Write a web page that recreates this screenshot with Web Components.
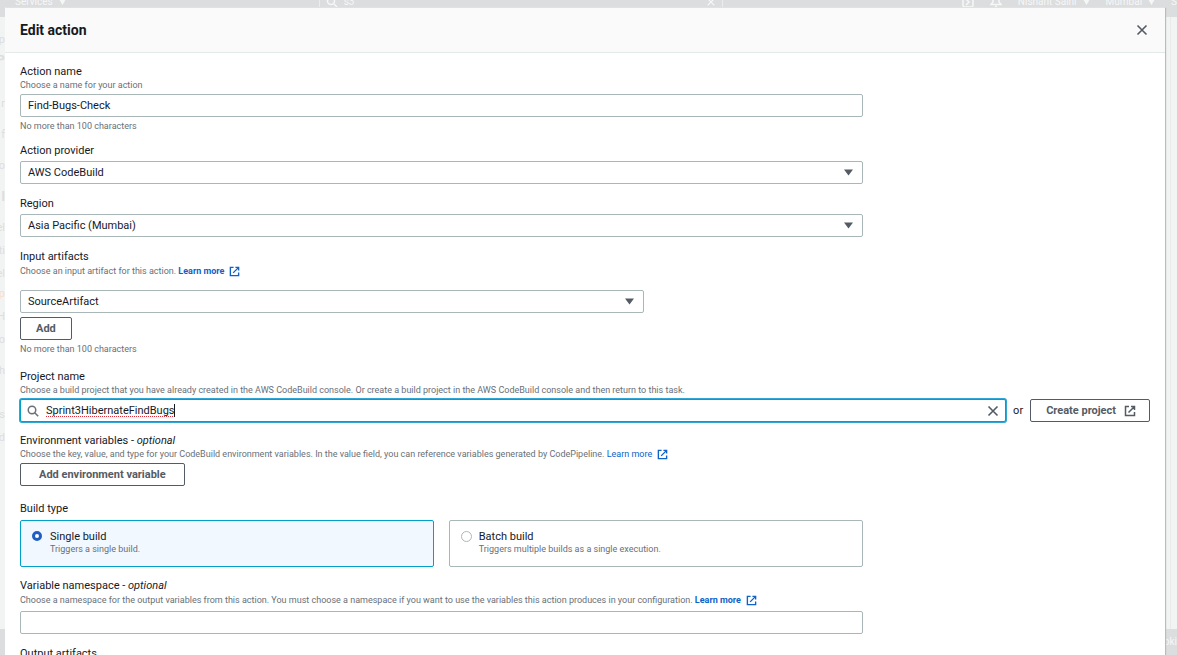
<!DOCTYPE html>
<html lang="en">
<head>
<meta charset="utf-8">
<title>Edit action</title>
<style>
html, body { height: 100%; margin: 0; overflow: hidden; }
body {
  font-family: Roboto, "Noto Sans", sans-serif;
  font-size: 11px; line-height: 14px; color: #16191f; background: #f2f3f3;
}
</style>
</head>
<body>
<console-page>
  <console-nav slot="nav"></console-nav>
  <console-sidebar slot="side"></console-sidebar>
  <edit-modal heading="Edit action">
    <text-field label="Action name" hint="Choose a name for your action" note="No more than 100 characters" value="Find-Bugs-Check"></text-field>
    <select-field label="Action provider" value="AWS CodeBuild"></select-field>
    <select-field label="Region" value="Asia Pacific (Mumbai)"></select-field>
    <select-field nested label="Input artifacts" hint="Choose an input artifact for this action." note="No more than 100 characters" value="SourceArtifact" action="Add"><ext-link slot="link" strong>Learn more</ext-link></select-field>
    <search-field label="Project name" hint="Choose a build project that you have already created in the AWS CodeBuild console. Or create a build project in the AWS CodeBuild console and then return to this task." value="Sprint3HibernateFindBugs"><aws-button icon>Create project</aws-button></search-field>
    <button-field label="Environment variables" optional hint="Choose the key, value, and type for your CodeBuild environment variables. In the value field, you can reference variables generated by CodePipeline."><ext-link slot="link">Learn more</ext-link><aws-button wide>Add environment variable</aws-button></button-field>
    <build-tiles label="Build type"></build-tiles>
    <text-field label="Variable namespace" optional tall hint="Choose a namespace for the output variables from this action. You must choose a namespace if you want to use the variables this action produces in your configuration." value=""><ext-link slot="link" strong>Learn more</ext-link></text-field>
    <text-field label="Output artifacts" value=""></text-field>
  </edit-modal>
</console-page>

<script>
const EXT = `<svg viewBox="0 0 12 12" width="12" height="12" fill="none" stroke="currentColor" stroke-width="1.5" aria-hidden="true"><path d="M5 1.500H1.500v9h9V7M7 1.500h3.500V5M10.500 1.500 4.500 7.500"/></svg>`;
const CROSS = `<svg viewBox="0 0 12 12" width="12" height="12" fill="none" stroke="#545b64" stroke-width="1.600" aria-hidden="true"><path d="M1.500 1.500l9 9M10.500 1.500l-9 9"/></svg>`;
const ARROW = `<svg class="arrow" viewBox="0 0 9 7" width="9" height="7" aria-hidden="true"><path d="M0 .5h9L4.500 6.500z" fill="#545b64"/></svg>`;

const FIELD = `
:host { display: block; --width: calc(75% - 5px); padding-top: 1px; margin-bottom: 12px; }
:host([note]) { margin-bottom: 11px; }
* { box-sizing: border-box; }
label, .label { display: block; line-height: 14px; }
.hint { margin-top: 1px; font-size: 9px; line-height: 11px; color: #687078; white-space: nowrap; }
:host([nested]) .hint { margin-top: 0; line-height: 14px; }
:host([nested]) .control { margin-top: 12px; }
:host([tall]) .hint { margin-top: 0; line-height: 14px; }
:host([tall]) .control { margin-top: 4px; }
.control { margin-top: 3px; width: var(--width); }
.note { margin-top: 4px; font-size: 9px; line-height: 11px; color: #687078; }
input[type=text], input[type=search], select {
  display: block; width: 100%; height: 23px; margin: 0; padding: 0 7px;
  font: inherit; color: inherit; background: #fff;
  border: 1px solid #aab7b8; border-radius: 2px; appearance: none; outline: none;
}
`;

class Base extends HTMLElement {
  connectedCallback() {
    if (this.shadowRoot) return;
    this.attachShadow({ mode: 'open' }).innerHTML = `<style>${this.css()}</style>${this.html()}`;
  }
  a(name) { return this.getAttribute(name) || ''; }
  css() { return FIELD; }
  head(tag = 'label for="c"') {
    const close = tag.split(' ')[0];
    const opt = this.hasAttribute('optional') ? ' - <i>optional</i>' : '';
    const hint = this.a('hint') ? `<div class="hint">${this.a('hint')} <slot name="link"></slot></div>` : '';
    return `<${tag}>${this.a('label')}${opt}</${close}>${hint}`;
  }
  note() { return this.a('note') ? `<div class="note">${this.a('note')}</div>` : ''; }
}

customElements.define('ext-link', class extends Base {
  css() { return `
    :host { font-size: 9px; }
    a { color: #0f62c8; text-decoration: none; }
    :host([strong]) a { font-weight: 700; }
    svg { margin: -2px 0 -2px 5px; vertical-align: middle; width: 11px; height: 11px; }`; }
  html() { return `<a href="#"><slot></slot>${EXT}</a>`; }
});

customElements.define('aws-button', class extends Base {
  css() { return `
    :host { display: inline-block; vertical-align: top; }
    button { display: flex; align-items: center; gap: 8px; height: 23px; box-sizing: border-box; margin: 0; padding: 0 15px;
      font: inherit; font-weight: 700; color: #545b64; background: #fff; white-space: nowrap;
      border: 1px solid #545b64; border-radius: 2px; }
    :host([icon]) button { padding: 0 13px 0 15px; }
    :host([wide]) button { padding: 0 18px; }`; }
  html() { return `<button type="button"><slot></slot>${this.hasAttribute('icon') ? EXT : ''}</button>`; }
});

customElements.define('text-field', class extends Base {
  html() { return `${this.head()}<div class="control"><input id="c" type="text" value="${this.a('value')}"></div>${this.note()}`; }
});

customElements.define('select-field', class extends Base {
  css() { return FIELD + `
    :host([nested]) { margin-bottom: 14px; }
    :host([nested]) .control { width: calc((75% - 5px) * 3 / 4 - 8px); }
    .box { display: grid; align-items: center; }
    .box > * { grid-area: 1 / 1; }
    .arrow { justify-self: end; margin-right: 10px; pointer-events: none; }
    aws-button { margin-top: 4px; }`; }
  html() {
    const add = this.a('action') ? `<aws-button>${this.a('action')}</aws-button>` : '';
    return `${this.head()}<div class="control box"><select id="c"><option>${this.a('value')}</option></select>${ARROW}</div>${add}${this.note()}`;
  }
});

customElements.define('search-field', class extends Base {
  css() { return FIELD + `
    :host { margin-bottom: 11px; }
    .row { display: flex; align-items: center; gap: 7px; margin-top: 3px; }
    .box { flex: 1; display: grid; align-items: center; }
    .box > * { grid-area: 1 / 1; }
    input[type=search] { padding: 0 30px 0 25px; border-color: #00a1c9; box-shadow: 0 0 0 1px #2ea6d6; caret-color: transparent;
      text-decoration-line: underline; text-decoration-style: dotted; text-decoration-color: #e0303a;
      text-decoration-thickness: 1px; text-underline-offset: 2px; text-decoration-skip-ink: none; }
    input::-webkit-search-cancel-button { display: none; }
    .glass { margin-left: 7px; pointer-events: none; }
    .caret { width: 1px; height: 13px; margin-left: 154px; background: #16191f; pointer-events: none; }
    .clear { justify-self: end; display: flex; margin-right: 7px; padding: 0; border: 0; background: none; }`; }
  html() { return `${this.head()}<div class="row"><div class="box"><input id="c" type="search" spellcheck="true" value="${this.a('value')}">
    <svg class="glass" viewBox="0 0 12 12" width="12" height="12" fill="none" stroke="#687078" stroke-width="1.500" aria-hidden="true"><circle cx="5" cy="5" r="3.750"/><path d="M7.700 7.700l3.500 3.500"/></svg>
    <span class="caret"></span><button class="clear" type="button" aria-label="Clear">${CROSS}</button></div><span>or</span><slot></slot></div>`; }
});

customElements.define('button-field', class extends Base {
  css() { return FIELD + `:host { margin-bottom: 15px; }`; }
  html() { return `${this.head('div class="label"')}<div class="control"><slot></slot></div>`; }
});

customElements.define('build-tiles', class extends Base {
  css() { return FIELD + `
    :host { margin-bottom: 11px; }
    fieldset { margin: 0; padding: 0; border: 0; min-width: 0; }
    legend { padding: 0; line-height: 14px; }
    .tiles { display: grid; grid-template-columns: 1fr 1fr; gap: 15px; margin-top: 4px; width: var(--width); }
    .tile { display: grid; grid-template-columns: 11px 1fr; column-gap: 7px; align-content: start; min-height: 47px;
      padding: 9px 11px 8px; border: 1px solid #aab7b8; border-radius: 2px; }
    .tile:has(:checked) { background: #f1f8ff; border-color: #00a1c9; }
    input { appearance: none; align-self: center; width: 11px; height: 11px; margin: 0 0 2px; border: 1px solid #aab7b8; border-radius: 50%; background: #fff; }
    input:checked { width: 10px; height: 10px; border: 3px solid #1f5fc4; }
    .hint { grid-column: 2; margin-top: 0; }`; }
  html() {
    const tile = (name, text, on) => `<label class="tile"><input type="radio" name="build" ${on}><span>${name}</span><span class="hint">${text}</span></label>`;
    return `<fieldset><legend>${this.a('label')}</legend><div class="tiles">${tile('Single build', 'Triggers a single build.', 'checked')}${tile('Batch build', 'Triggers multiple builds as a single execution.', '')}</div></fieldset>`;
  }
});

customElements.define('edit-modal', class extends Base {
  css() { return `
    :host { display: block; height: 100%; box-sizing: border-box; overflow: hidden; background: #fff; box-shadow: 1px 0 1px #b9bcbf, 0 -1px 0 #e8eaea; }
    header { display: flex; justify-content: space-between; align-items: center; height: 45px; box-sizing: border-box;
      padding: 0 17px 0 15px; background: #fafafa; border-bottom: 1px solid #e3e8e8; }
    h1 { margin: 0; font-size: 14px; line-height: 18px; font-weight: 700; }
    button { display: flex; padding: 0; border: 0; background: none; }
    main { padding: 11px 15px 0; }`; }
  html() { return `<header><h1>${this.a('heading')}</h1><button type="button" aria-label="Close">${CROSS}</button></header><main><slot></slot></main>`; }
});

customElements.define('console-nav', class extends Base {
  css() { return `
    :host { display: flex; align-items: center; gap: 16px; height: 17px; padding: 0 0 0 15px; box-sizing: border-box;
      background: #dcdddf; color: #f6f7f7; font-size: 10px; line-height: 4px; white-space: nowrap; overflow: hidden; }
    span { display: flex; align-items: center; height: 3px; margin-bottom: 14px; gap: 6px; }
    .find { flex: 0 1 404px; height: 17px; margin: 0 auto 0 237px; padding: 0 6px; box-sizing: border-box; justify-content: space-between;
      border: solid #ebecec; border-width: 0 1px; }
    svg { fill: none; stroke: currentColor; stroke-width: 1.500; }
    .tri { fill: currentColor; stroke: none; }`; }
  html() {
    const tri = `<svg class="tri" width="7" height="6" viewBox="0 0 7 6"><path d="M0 0h7L3.500 6z"/></svg>`;
    return `<span>Services ${tri}</span><span class="find"><span><svg width="12" height="12" viewBox="0 0 12 12"><circle cx="5" cy="5" r="3.500"/><path d="M8 8l3 3"/></svg>s3</span>
    <span><svg width="10" height="10" viewBox="0 0 12 12"><path d="M2 2l8 8M10 2l-8 8"/></svg></span></span>
    <span><svg width="12" height="12" viewBox="0 0 12 12"><rect x="1" y="1" width="10" height="10" rx="2"/><path d="M4 3l3 3-3 3"/></svg></span>
    <span><svg width="12" height="12" viewBox="0 0 12 12"><path d="M1 8.500h10L9 6V1H3v5zM5 10.500h2"/></svg></span>
    <span>Nishant Saini ${tri}</span><span>Mumbai ${tri}</span><span>S</span>`;
  }
});

customElements.define('console-sidebar', class extends Base {
  css() { return `
    :host { display: block; width: 5px; overflow: hidden; color: #dcdee0; padding-top: 16px; }
    div { display: flex; justify-content: flex-end; height: 23px; line-height: 14px; }
    .mid { height: 20px; }
    .wide { height: 31px; }
    .group { height: 44px; }
    .warm { color: #f6dfc6; }
    b { font-size: 13px; }`; }
  html() { return `<div class="mid">p</div><div class="group"><b>P</b></div><div class="wide">r</div><div class="wide">f</div><div class="wide">o</div><div class="wide"><b>l</b></div><div>el</div><div>ti</div><div class="mid">el</div><div>p</div><div>H</div><div class="wide">o</div><div class="group">h</div><div>s</div><div>d</div>`.replace('<div>p', '<div class="warm">p'); }
});

customElements.define('console-page', class extends Base {
  css() { return `
    :host { position: relative; display: grid; grid-template: auto 1fr 26px / auto 1fr; height: 100%; overflow: hidden; }
    .nav { grid-column: 1 / -1; min-width: 0; }
    .page { margin-right: 6px; border-right: 1px solid #e9ebeb; }
    .foot { grid-column: 1 / -1; background: #dcdddf; color: #f6f7f7; font-size: 10px; line-height: 26px; text-align: right; }
    .over { position: absolute; inset: 8px 12px 0 5px; }`; }
  html() { return `<div class="nav"><slot name="nav"></slot></div><slot name="side"></slot><div class="page"></div><div class="foot">oki</div><div class="over"><slot></slot></div>`; }
});
</script>
</body>
</html>
